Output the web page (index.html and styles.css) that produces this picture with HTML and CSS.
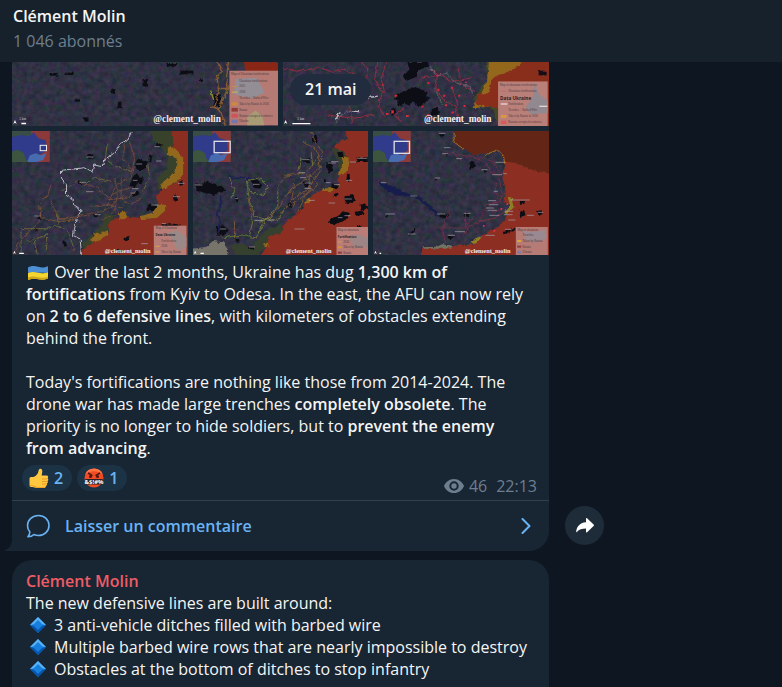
FILE: index.html
```html
<!DOCTYPE html>
<html lang="fr">
<head>
<meta charset="utf-8">
<meta name="viewport" content="width=device-width, initial-scale=1">
<title>Clément Molin</title>
<link rel="stylesheet" href="styles.css">
</head>
<body>
<svg class="defs" aria-hidden="true">
  <defs>
    <filter id="terrain" x="0" y="0" width="100%" height="100%" color-interpolation-filters="sRGB">
      <feTurbulence type="fractalNoise" baseFrequency="0.06" numOctaves="5" seed="4"/>
      <feColorMatrix values=".2 0 0 0 .09  0 .13 0 0 .13  .1 0 .12 0 .155  0 0 0 0 1"/>
    </filter>
    <filter id="rough" x="-5%" y="-5%" width="110%" height="110%">
      <feTurbulence type="fractalNoise" baseFrequency="0.07" numOctaves="3" seed="9"/>
      <feDisplacementMap in="SourceGraphic" scale="12" xChannelSelector="R" yChannelSelector="G"/>
    </filter>
    <symbol id="inset" viewBox="0 0 114 93">
      <rect width="114" height="93" fill="#394c45"/>
      <path d="M58 0h56v93H70l-8-30z" fill="#8b3a39"/>
      <path d="M0 18l30-6 22 4 14-12 14 18 22 6 4 28-18 14-20 4-12 16-16-6-10-16-14-6-16 2z" fill="#303b8b"/>
      <path d="M46 93l8-20 18-6 14 6 18-6-10 20-20 6z" fill="#486aae"/>
      <path d="M0 62l18-6 18 10 8 27H0z" fill="#3d553f"/>
    </symbol>
    <symbol id="diamond" viewBox="0 0 16 16">
      <path d="M8 0l8 8-8 8-8-8z" fill="#1475d3"/>
      <path d="M8 0l8 8-8-1-8 1z" fill="#59b3f5"/>
      <path d="M0 8l8 8 8-8-8 2z" fill="#0754ab"/>
      <path d="M8 3l5 5-5 5-5-5z" fill="#1780df"/>
    </symbol>
  </defs>
</svg>

<header class="topbar">
  <h1 class="topbar-title">Clément Molin</h1>
  <p class="topbar-sub">1 046 abonnés</p>
</header>

<main class="feed">
  <div class="row">
    <article class="bubble bubble-tail">
      <div class="album album-two">
        <figure class="photo">
          <svg viewBox="36 187 798 191" preserveAspectRatio="xMidYMid slice" role="img" aria-label="Carte des fortifications">
            <rect x="36" y="187" width="798" height="191" filter="url(#terrain)"/>
            <g filter="url(#rough)">
              <path d="M730 187h110v60H740z" fill="#8a2816"/>
              <g fill="#111017"><path d="M150 220h24v8h-24zM195 218h28v8h-28zM428 236h16v24h-16zM540 212h36v12h-36zM334 266h14v14h-14zM354 308h14v16h-14zM500 190h28v10h-28zM640 284h22v34h-22zM250 352h16v10h-16zM225 298h16v8h-16zM596 236h14v8h-14z"/></g>
              <g class="tracks" fill="none" stroke="#a26a2c" stroke-width="4"><path d="M652 187l14 24-16 20 4 40-10 50 20 20 10 37M684 187l-6 50 6 30-30 60-26-8M652 266h32"/></g>
              <path d="M630 270l10 30" stroke="#8b8c34" stroke-width="4"/>
            </g>
            <rect x="687" y="213" width="147" height="163" fill="#b47a73"/>
            <path d="M705 238l65-4 22 45-38 16-54-12z" fill="#938d96"/>
            <path d="M740 350l25-18 20 16 6 28h-51z" fill="#a99c75"/>
            <g class="legend-sm"><text x="692" y="226">Map of Ukrainian fortifications</text><text x="716" y="246">Ukrainian fortifications</text><text x="716" y="263">2025</text><text x="716" y="280">2026</text><text x="716" y="298">Trenches + Barbed Wire</text><text x="716" y="315">Taken by Russia in 2026</text><text x="716" y="333">Russia</text><text x="716" y="350">Russian occupied territories</text><text x="716" y="367">Ukraine</text></g>
            <path d="M694 260h18" stroke="#c98a51" stroke-width="3"/><path d="M694 277h18" stroke="#c7b849" stroke-width="3"/>
            <path d="M693 307h19v10h-19z" fill="#cc8a3e"/><path d="M693 324h19v11h-19z" fill="#913c3b"/><path d="M693 342h19v11h-19z" fill="#d0535a"/><path d="M693 359h19v11h-19z" fill="#7578ad"/>
            <path d="M42 372l5-12 5 12-5-4zM66 368h14v5H66z" fill="#fff"/><text class="scale" x="60" y="360">5 km</text>
            <text class="credit" x="460" y="367">@clement_molin</text>
          </svg>
        </figure>
        <figure class="photo">
          <svg viewBox="15 22 798 191" preserveAspectRatio="xMidYMid slice" role="img" aria-label="Carte des fortifications">
            <rect x="15" y="22" width="798" height="191" filter="url(#terrain)"/>
            <g filter="url(#rough)">
              <path d="M625 15h200v200H660l-15-50-60-30 40-60z" fill="#424626"/>
              <path d="M632 15h110v80l-100 60-60 5 30-50 14-30z" fill="#94681f"/>
              <path d="M735 15h90v200H665l-5-55-65-10 5-35 30 0 5-35 15-15 30-10 20-10 20-10z" fill="#8a2e1f"/>
              <path d="M780 48h24v14h-24z" fill="#171016"/>
              <g fill="#110f17"><path d="M388 22h60v14l-25 10-10 22-30 10-8-14 20-20zM358 116l30-8 18-14 20 8 26 10-8 14 16 6-16 8-14 16-26-14-10 10-16-6-8 8-14-4 6-12-16-6zM458 162l20-4 8 16-22 8-6-6zM336 164l16-4 4 18-18 4z"/></g>
              <g class="tracks" fill="none" stroke="#a82d42" stroke-width="3"><path d="M15 40l50 10 60-12 40 15 35-10 40 20M250 22l20 20-10 40M300 22l-10 50 25 40-15 40 20 30M325 22l-15 50 10 40M215 150l10 60M380 160l-30 20 20 20M430 70l60-10 30 20 60-10M450 40l30 20-10 35 30 45 30 10 10 40M540 40l10 50 40 20M520 100l20 50M150 180l80 10 60-10"/></g>
              <g class="tracks" fill="none" stroke="#898b95" stroke-width="2"><path d="M455 35l20 30 30-10 30 30 40 10 10 30M470 100l25 55M175 205l15-25 30-12"/></g>
              <path d="M272 128l28-4M220 168l24 2M176 190l12-18" stroke="#bdb8ba" stroke-width="4"/>
            </g>
            <g fill="#d62a38"><path d="M448 82h6v6h-6zM478 102h6v6h-6zM495 120h6v6h-6zM518 96h6v6h-6zM500 148h7v6h-7zM540 120h6v6h-6zM556 150h6v6h-6zM430 152h6v6h-6zM520 170h7v6h-7zM384 180h8v6h-8zM350 120h8v6h-8zM340 166h8v10h-8zM475 60h5v5h-5zM560 80h5v5h-5zM312 88h5v5h-5zM324 174h8v6h-8zM446 178h8v6h-8zM580 192h6v5h-6zM530 190h6v5h-6z"/></g>
            <rect x="659" y="80" width="148" height="133" fill="#b9807a"/>
            <path d="M767 84l14 34 26 20v36l-50 4-16-20 22-32z" fill="#928890"/>
            <g class="legend-sm"><text x="664" y="94">Map of ukrainian fortifications</text><text x="689" y="113">Ukrainian fortifications</text><text x="689" y="151">Fortification</text><text x="689" y="169">Trenches + Barbed Wire</text><text x="689" y="187">Taken by Russia in 2026</text><text x="689" y="205">Russian occupied territories</text></g>
            <text class="legend-lg" x="665" y="136">Data Ukraine</text>
            <path d="M667 109h16" stroke="#ce5962" stroke-width="2"/><path d="M667 147h20M782 154h24" stroke="#f7eeee" stroke-width="3"/>
            <path d="M667 180h17v9h-17z" fill="#d99840"/><path d="M667 197h17v10h-17z" fill="#d9595d"/>
            <path d="M20 207l5-12 5 12-5-4zM45 204h54v4H45z" fill="#fff"/><text class="scale" x="60" y="194">5 km</text>
            <text class="credit" x="438" y="201">@clement_molin</text>
          </svg>
          <span class="date-chip">21 mai</span>
        </figure>
      </div>
      <div class="album album-three">
        <figure class="photo">
          <svg viewBox="12 9 528 372" preserveAspectRatio="xMidYMid slice" role="img" aria-label="Carte des fortifications, est">
            <rect x="12" y="9" width="528" height="372" filter="url(#terrain)"/>
            <g filter="url(#rough)">
              <path d="M425 0H495V60L522 90 505 140 450 190V150L478 120 480 90 462 60 440 40zM225 345L285 290 290 260 325 262 305 290 300 320 230 370z" fill="#37432b"/>
              <path d="M490 0L495 60 522 85V130L512 160 470 180 445 205 450 228 472 235 465 255 430 272 345 265 305 280 302 322 270 335 225 365 215 395H555V0z" fill="#8a2d20"/>
              <path d="M480 55L500 60 526 85V135L510 160 465 183 457 168 482 150 508 120V92L480 80zM444 230h28v18l-25 22-48 4v-9l38-12zM330 256l20-6 12 16-25 10zM257 312l18 4 25-10 2 16-40 20-16-5 12-12z" fill="#94681f"/>
              <g fill="#100f16"><path d="M385 100l14-8 22 10-6 18-20 8-14-10zM375 147l12-12 11 16 9-4-6 22-13-2-7 12-13-6zM370 194l18-4 8 10-20 6zM416 230l18-4 14 8-10 14-22 2zM236 82l18-4 8 12-20 4zM88 262h12v14H88zM80 300h10v10H80zM258 256l14 2-4 10-12-2zM164 342l10-4 4 16-12 2zM495 207l10-12 4 22-10 4zM446 44l16 4-6 10-12-2zM424 76l10 4-4 24-8-4zM514 162l10-6 2 14-10 4zM460 292l24-6 36 4-20 8-34 4zM350 331l12-8 2 12-12 6zM325 366h22l-6 8-12-2zM212 157l10 4-4 8-8-4z"/></g>
              <g class="tracks" fill="none" stroke="#8c5634" stroke-width="2.500"><path d="M365 40l15 50-10 60-45 20-35 80-60 10-50 20M130 170l-10 30-25 30 5 40 50 10 40 0M125 215l30 60 60-10M160 190l50-30 60 20 30 30 30-20 40-10M320 150l10 40-10 60-40 30M340 150l0 60 30 20 30-20M300 215l60-5 30-30M290 250l60-50M245 235l60-5 40 10M355 30l-10 60 30 40M100 235l-5 45-60 60-20 40M148 270l70 10"/></g>
              <g class="tracks" fill="none" stroke="#797338" stroke-width="3"><path d="M298 45l-5 45 30 25 50 15M420 110l5 40-20 40M40 302h80l20-10 40 15 20 60M40 302v70M60 340l60-20-5 50M220 180l40-30 50 10M150 290v-40M78 330l10 50"/></g>
              <path d="M370 12l-10 24-22 10-20 30-30 20-5 20-25-5-5 20-22-12-70 8 0 26 15 20 0 30 20 10 2 20 22 15-15 25-8 50 20 10 4 50" fill="none" stroke="#bab9c2" stroke-width="3"/>
            </g>
            <path d="M215 163h20M235 191h22M385 108h18M445 99h16M375 157h14M372 182h20M430 231h22M260 260h18M236 87h22M496 206h20M510 166h20M400 347h20M368 195h15M462 287h12M80 264h18M440 56h16" stroke="#aaa6b0" stroke-width="2"/>
            <use href="#inset" x="12" y="9" width="114" height="93"/><rect x="97" y="52" width="19" height="16" fill="none" stroke="#eee" stroke-width="3"/>
            <rect x="438" y="293" width="98" height="88" fill="#b77c76"/><path d="M478 315l30-8 28 20v30l-25 12-15-30z" fill="#9b8988"/>
            <g class="legend-sm"><text x="443" y="304">Map of Ukrainian</text><text x="460" y="341">Fortification</text><text x="460" y="358">2026</text><text x="460" y="375">Taken by Russia</text></g>
            <text class="legend-lg legend-tiny" x="443" y="325">Data Ukraine</text><path d="M443 355h12M443 372h12" stroke="#dca344" stroke-width="3"/>
            <path d="M16 378l4-10 4 10-4-3zM34 374h14v4H34z" fill="#fff"/>
            <text class="credit credit-sm" x="291" y="374">@clement_molin</text>
          </svg>
        </figure>
        <figure class="photo">
          <svg viewBox="15 9 528 372" preserveAspectRatio="xMidYMid slice" role="img" aria-label="Carte des fortifications, sud-est">
            <rect x="15" y="9" width="528" height="372" filter="url(#terrain)"/>
            <g filter="url(#rough)">
              <path d="M10 362l45-5 20-18 30 4 14 20 5 30H10z" fill="#77756b"/>
              <path d="M430 60L468 66 482 100 455 130 450 100zM125 352L160 347 190 360 230 310 280 290 285 315 245 325 235 358 200 390H150z" fill="#35402d"/>
              <path d="M470 0L478 30 440 50V62L468 70 485 105 475 130 452 142V180L405 185 380 195 352 222 340 248 290 285 278 315 242 325 235 358 210 395H555V0z" fill="#8c2d20"/>
              <path d="M460 82l22 8 2 23-16 26-18 2 8-20 8-15zM404 181l26 0 20-13 6 8-28 14-24-2zM352 218l12-10 6 10-14 8zM230 346l12-2v12l-12 2z" fill="#94681f"/>
              <g fill="#110f15"><path d="M20 170l22-2 10-10 22 10 30 8 12 12-24 4-10 10-26-8-32-6zM84 296l22-4 16 14-8 14-26 0zM188 156l20-2 12 16-4 12-16-2-8-12zM144 209l10 2-4 10-10-4zM342 94l20-2 6 14-20-2zM416 104l14-4 6 28-16 8zM348 164l14-2 2 14-14 2zM404 150l12 6-6 8zM434 166l20 8-8 10-12-4zM372 28l14-6 4 20-16 2zM448 73l16-2 4 16-16 0zM506 88l34 0 0 14-30 0zM478 137l8 2-2 24-8-6zM428 272l26-10 10-12 22 6-6 16-22 10-18 10-20-8zM470 205l26-4 6 16-24 12-8-10zM515 230l20-4 6 16-22 6zM500 252l24-4 8 12-26 4zM435 198l16-4 0 10-14 2zM505 291l16 0-4 10-12-2zM143 330l10 0 2 10-12 2zM183 358l12-4 4 8-14 4zM302 225l12 4-4 8-10-2z"/></g>
              <path d="M118 130l12 20 60 2M98 205l2 30-14 20 12 30-6 30" fill="none" stroke="#1a2350" stroke-width="5"/>
              <g class="tracks" fill="none" stroke="#8e5d30" stroke-width="3"><path d="M370 12l15 35 20 25-15 50-30 30-50 30-40 60-40 40M345 40l40 25 15 60-40 60-50 30M395 80l-35 50 30 40-40 35-20 50M270 180l20-35 50-10 30 10M140 280v50M180 210l15 60M320 165l-10 60-30 30M360 145l10 40-60 50"/></g>
              <g class="tracks" fill="none" stroke="#7a8736" stroke-width="3"><path d="M175 155l10 60 15 50 40 10 30-40 0-50M176 158l40-8 25 25-15 30-40-15zM195 275l-10 50M105 330l60-10 40 10 20-50M200 280l70-5 20-30M125 150l15 40-10 20M340 90l-10 40M240 270l-35 55M370 75l5 40"/></g>
            </g>
            <path d="M20 171h24M195 169h20M342 95h22M332 134h20M337 149h18M350 165h20M420 105h24M430 101h22M485 102h20M508 91h30M475 157h18M422 225h20M363 217h18M350 181h20M200 277h26M242 276h16M320 303h30M97 303h18M470 213h22M450 269h14M470 263h18M414 164h14M183 357h18M142 212h10M438 170h18" stroke="#aaa4ae" stroke-width="2"/>
            <use href="#inset" x="15" y="9" width="114" height="93"/><rect x="79" y="40" width="48" height="34" fill="none" stroke="#dcdce6" stroke-width="4"/>
            <rect x="446" y="297" width="97" height="84" fill="#b97c77"/><path d="M478 325l30-6 35 12v26l-40 4z" fill="#9d8585"/>
            <g class="legend-sm"><text x="450" y="308">Map of ukrainian</text><text x="466" y="345">2026</text><text x="466" y="361">Taken by Russia</text><text x="466" y="377">Russia</text></g>
            <text class="legend-lg legend-tiny" x="450" y="329">Fortification</text><path d="M450 342h12" stroke="#dcb144" stroke-width="2"/><path d="M450 355h12v6h-12z" fill="#d9903d"/><path d="M450 371h12v6h-12z" fill="#91373b"/>
            <path d="M18 378l4-10 4 10-4-3zM38 374h10v4H38z" fill="#fff"/>
            <text class="credit credit-sm" x="294" y="374">@clement_molin</text>
          </svg>
        </figure>
        <figure class="photo">
          <svg viewBox="12 9 528 372" preserveAspectRatio="xMidYMid slice" role="img" aria-label="Carte des fortifications, Dnipro">
            <rect x="12" y="9" width="528" height="372" filter="url(#terrain)"/>
            <g filter="url(#rough)">
              <path d="M162 358l40-2 20-8 28 5 0 16-86 5z" fill="#6e7463"/>
              <path d="M404 60h150v330H160v-28l70 0 40-12 40 0 30-28 40-20 30-30 15-35-18-20 5-30-10-30 5-40z" fill="#8c2f22"/>
              <path d="M416 207l14 6 4 26-20 20-8-4 14-16 2-16zM304 347l10-14 26-10-18 20z" fill="#8d7f27"/>
              <path d="M256 0h294v140l-60-15-50-20-34-5-16-34-40 10-40 5-16-14-36-22z" fill="#642716"/>
              <path d="M256 15l0 30 30 18M350 80l36-14 18 18 4 22" fill="none" stroke="#a57120" stroke-width="3"/>
              <path d="M30 162l24 6 40 16 26 16-10 8-28-6-26-14-14-12z" fill="#171e4c"/>
              <path d="M110 200l40 10 40 35 20 16" fill="none" stroke="#171e4c" stroke-width="7"/>
              <g fill="#110f16"><path d="M300 108l12-10 10 12-4 10-16 2zM210 260l18 0 10-6 4 10-12 6-18-2zM122 318l16-20 2 8-16 22zM236 322l20 4-10 8-10-4zM134 202l14 2-6 8zM212 16l16 0-4 8-12-2zM196 149l8 0 0 8-8 0zM288 254l14 4-8 8-10-4zM228 74l8 4-6 6zM50 260h8v6h-8zM450 248l16-2 4 16-16 6zM505 249l14-2 2 12-12 4zM402 313l22-8 0 8-20 6zM453 219l14 0 0 8-14 4zM424 304l12-8 4 8-14 8zM344 124l10 4-6 8z"/></g>
              <g class="tracks" fill="none" stroke="#8c2e4b" stroke-width="2.500"><path d="M260 80l50 5 40 20 20 30 30 10M310 90l40 0 30 15M390 150l10 50-10 30M250 70l30 30M330 285l-30 10-20 30M400 220l-50 10-20 50 50-10M370 255l40-15M200 300l90 0 20-30M240 250l-20 50 10 45M370 105l30 35M290 250l0 50 20 20M385 165l-10 30 25 10M345 250l40-30M410 250l-40 25-40 5"/></g>
              <path class="tracks" d="M210 40l-15 100M180 130l-20 70" fill="none" stroke="#20395a" stroke-width="4"/>
            </g>
            <path d="M380 103h28M262 92h18M225 59h20M220 77h18M338 125h18M370 140h30M402 137h12M198 150h16M36 164h16M50 258h28M124 204h22M204 258h24M118 318h22M236 322h22M258 311h30M285 256h20M358 218h24M425 216h58M360 230h28M352 240h24M356 247h28M362 262h30M407 250h26M405 260h26M475 262h20M507 253h16M375 190h12M350 322h28M210 16h20M418 276h22M408 304h20" stroke="#aaa4ae" stroke-width="2"/>
            <path d="M374 306h5v5h-5zM342 291h5v5h-5zM413 226h5v5h-5zM395 240h5v5h-5z" fill="#e63446"/>
            <use href="#inset" x="12" y="9" width="114" height="93"/><rect x="76" y="40" width="46" height="36" fill="none" stroke="#dcdce6" stroke-width="4"/>
            <rect x="441" y="297" width="96" height="84" fill="#b67b75"/><path d="M465 308l28 4 36-6 5 24-40 16-25-12z" fill="#9a8990"/>
            <g class="legend-sm"><text x="445" y="308">Map of ukrainian</text><text x="461" y="325">Trenches</text><text x="461" y="342">Taken by Russia</text><text x="461" y="359">Russia</text><text x="461" y="376">Ukraine</text></g>
            <path d="M445 336h12v6h-12z" fill="#dda43e"/><path d="M445 353h12v6h-12z" fill="#94393e"/><path d="M445 370h12v6h-12z" fill="#7678b2"/>
            <path d="M16 378l4-10 4 10-4-3zM32 374h5v4h-5z" fill="#fff"/>
            <text class="credit credit-sm" x="288" y="374">@clement_molin</text>
          </svg>
        </figure>
      </div>

      <div class="text">
        <p><svg class="emoji" viewBox="0 0 22 16" role="img" aria-label="Drapeau de l’Ukraine"><path d="M1 2.500C5 .5 8 1 11 1.800s6 1 10-.6v6.600H1z" fill="#4d8fd3"/><path d="M1 8c4-1.500 7-.8 10-.2s6 .8 10-.6v6.300c-4 1.700-7 1.300-10 .7S5 13.500 1 15z" fill="#f5d52f"/><path d="M1 12.500c4-1.500 7-.8 10-.2s6 .8 10-.6v1.800c-4 1.700-7 1.300-10 .7S5 13.500 1 15z" fill="#cda51b"/></svg> Over the last 2 months, Ukraine has dug <strong>1,300 km of fortifications</strong> from Kyiv to Odesa. In the east, the AFU can now rely on <strong>2 to 6 defensive lines</strong>, with kilometers of obstacles extending behind the front.</p>
        <p>Today's fortifications are nothing like those from 2014-2024. The drone war has made large trenches <strong>completely obsolete</strong>. The priority is no longer to hide soldiers, but to <strong>prevent the enemy from advancing</strong>.</p>
      </div>

      <div class="meta">
        <div class="reactions">
          <button class="reaction" type="button" aria-label="Pouce levé, 2">
            <svg viewBox="0 0 20 20" aria-hidden="true"><path d="M10.500 1c1.800-.8 3 .6 2.800 2.500l-.6 4h4.800c1.800 0 2.300 2 .9 2.800 1.300.6 1.200 2.300 0 2.800.9.800.5 2.100-.5 2.500.6 1 0 2.100-1 2.300C17 19.300 15.800 20 14.500 20H8c-1.800 0-3.200-.8-4.600-1H2c-1 0-1.500-.8-1.500-2v-6C.5 9.700 1 9 2 9h2.200c2-.5 3.500-2 4.500-3.500.9-1.500.6-3.900 1.800-4.500z" fill="#ffc93f"/><path d="M13 11h5M13 13.500h5M13 16h4.500" fill="none" stroke="#e89323" stroke-width=".9"/><path d="M1 17c2 1 4 .5 7 2.500h6c1 0 2-.5 2.400-1.200" fill="none" stroke="#eda12a"/></svg>
            <span>2</span>
          </button>
          <button class="reaction" type="button" aria-label="Colère, 1">
            <svg viewBox="0 0 20 20" aria-hidden="true"><circle cx="10" cy="10" r="9.500" fill="#f04b24"/><path d="M1 7a9.500 9.500 0 0118 0C15 2 5 2 1 7z" fill="#ff7440"/><path d="M4 5l4.500 2.600M16 5l-4.500 2.600" stroke="#4d1714" stroke-width="1.500"/><circle cx="6.500" cy="8.500" r="1.500" fill="#4d1714"/><circle cx="13.500" cy="8.500" r="1.500" fill="#4d1714"/><rect x="1" y="11" width="18" height="5.500" rx="1" fill="#2a2225"/><text class="grawlix" x="10" y="16" text-anchor="middle">&amp;$!#%</text></svg>
            <span>1</span>
          </button>
        </div>
        <div class="stats">
          <svg viewBox="0 0 20 14" aria-hidden="true"><path fill-rule="evenodd" d="M10 0c4.600 0 8 3 9.700 6.300a1.500 1.500 0 010 1.400C18 11 14.600 14 10 14S2 11 .3 7.700a1.500 1.500 0 010-1.400C2 3 5.400 0 10 0zm0 2.300a4.700 4.700 0 100 9.400 4.700 4.700 0 000-9.400zm0 2a2.700 2.700 0 110 5.400 2.700 2.700 0 010-5.400z" fill="currentColor"/></svg>
          <span>46</span>
          <time>22:13</time>
        </div>
      </div>

      <a class="comment" href="#comments">
        <svg class="comment-icon" viewBox="0 0 24 24" aria-hidden="true"><path d="M12.500 1.500C18.500 1.500 23 5.800 23 11.500s-4.500 10-10.500 10c-1.700 0-3.200-.3-4.600-1-1.500 1.500-3.600 2.400-6 2.300 1.200-1.400 1.900-3 1.900-4.900C2.100 16.200 1.500 14 1.500 11.500c0-5.700 5-10 11-10z" fill="none" stroke="currentColor" stroke-width="1.600" stroke-linejoin="round"/></svg>
        <span>Laisser un commentaire</span>
        <svg class="chevron" viewBox="0 0 10 16" aria-hidden="true"><path d="M1.500 1l7 7-7 7" fill="none" stroke="currentColor" stroke-width="2" stroke-linecap="round" stroke-linejoin="round"/></svg>
      </a>
      <svg class="tail" viewBox="0 0 8 12" aria-hidden="true"><path d="M8 0v12H0V11c4-1 7-5 7-11z" fill="currentColor"/></svg>
    </article>
    <button class="share" type="button" aria-label="Partager">
      <svg viewBox="0 0 18 16" aria-hidden="true"><path d="M10 .8c0-.7.600-1 1.100-.5l6.500 6.200c.5.500.5 1 0 1.500l-6.500 6.200c-.5.500-1.100.2-1.100-.5V10.600C6 10.600 3 11.300.9 14c-.3.400-.8.200-.7-.3C.6 9 3.500 4.700 10 4.200z" fill="#fff"/></svg>
    </button>
  </div>

  <article class="bubble bubble-text">
    <h2 class="author">Clément Molin</h2>
    <p>The new defensive lines are built around:</p>
    <ul class="points">
      <li><svg class="gem" aria-hidden="true"><use href="#diamond"/></svg>3 anti-vehicle ditches filled with barbed wire</li>
      <li><svg class="gem" aria-hidden="true"><use href="#diamond"/></svg>Multiple barbed wire rows that are nearly impossible to destroy</li>
      <li><svg class="gem" aria-hidden="true"><use href="#diamond"/></svg>Obstacles at the bottom of ditches to stop infantry</li>
    </ul>
  </article>
</main>
</body>
</html>
```
FILE: styles.css
```css
* {
  box-sizing: border-box;
}

body {
  margin: 0;
  height: 100vh;
  display: flex;
  flex-direction: column;
  overflow: hidden;
  background: #0e1621;
  color: #f5f5f5;
  font: 16px/22px "Open Sans", "Noto Sans", sans-serif;
}

h1, h2, p, ul, figure {
  margin: 0;
  padding: 0;
}

strong {
  font-weight: 600;
}

button {
  border: 0;
  padding: 0;
  font: inherit;
  cursor: pointer;
}

.defs {
  position: absolute;
  width: 0;
  height: 0;
}

.topbar {
  flex: none;
  padding: 4px 13px 8px;
  background: #17212b;
}

.topbar-title {
  font-size: 16px;
  line-height: 25px;
  font-weight: 600;
}

.topbar-sub {
  line-height: 25px;
  color: #6d7f8f;
}

.feed {
  flex: 1;
  min-height: 0;
  overflow: hidden;
  display: flex;
  flex-direction: column;
  gap: 9px;
  padding-left: 12px;
}

.row {
  flex: none;
  display: flex;
  align-items: flex-end;
  gap: 16px;
}

.bubble {
  position: relative;
  flex: 0 1 537px;
  min-width: 0;
  background: #182533;
}

.bubble-tail {
  border-radius: 0 0 20px 0;
}

.tail {
  position: absolute;
  left: -7px;
  bottom: 0;
  width: 8px;
  height: 12px;
  color: #182533;
}

.album {
  display: grid;
  gap: 5px;
  margin-bottom: 5px;
}

.album-two {
  grid-template-columns: repeat(2, 1fr);
}

.album-three {
  grid-template-columns: repeat(3, 1fr);
}

.photo {
  position: relative;
}

.photo > svg {
  display: block;
  width: 100%;
}

.album-two .photo > svg {
  height: 64px;
}

.album-three .photo > svg {
  height: 124px;
}

.date-chip {
  position: absolute;
  left: 7px;
  top: 12px;
  padding: 4px 15px 5px;
  border-radius: 16px;
  background: #212c3ff0;
  font-weight: 600;
}

.tracks {
  opacity: 0.75;
}

.credit {
  font: bold 28px "Liberation Serif", serif;
  fill: #f3eeee;
}

.credit-sm {
  font-size: 19px;
}

.legend-sm {
  font: 9px "Liberation Serif", serif;
  fill: #503c40;
}

.legend-lg {
  font: bold 14px "Open Sans", sans-serif;
  fill: #2c2024;
}

.legend-tiny {
  font-size: 9px;
}

.scale {
  font: 10px "Liberation Serif", serif;
  fill: #d8d5dc;
}

.text {
  display: grid;
  gap: 22px;
  padding: 1px 18px 0 14px;
}

.emoji {
  width: 22px;
  height: 16px;
  margin: 0 1px;
  vertical-align: -3px;
}

.meta {
  display: flex;
  justify-content: space-between;
  padding: 6px 12px 0 10px;
}

.reactions {
  display: flex;
  gap: 5px;
  margin-bottom: 9px;
}

.reaction {
  display: flex;
  align-items: center;
  gap: 5px;
  height: 26px;
  padding: 0 9px 0 7px;
  border-radius: 13px;
  background: #1c3346;
  color: #6ab3f3;
  font-weight: 600;
}

.reaction svg {
  width: 20px;
  height: 20px;
}

.grawlix {
  font: bold 6px "Open Sans", sans-serif;
  fill: #fff;
}

.stats {
  display: flex;
  align-items: center;
  gap: 5px;
  padding-top: 6px;
  color: #6d7f8f;
}

.stats svg {
  width: 20px;
  height: 14px;
}

.stats time {
  margin-left: 4px;
}

.comment {
  display: flex;
  align-items: center;
  gap: 15px;
  padding: 13px 18px 13px 14px;
  border-top: 1px solid #2f404f;
  color: #6ab3f3;
  font-weight: 600;
  text-decoration: none;
}

.comment-icon {
  width: 24px;
  height: 24px;
}

.chevron {
  width: 10px;
  height: 16px;
  margin-left: auto;
}

.share {
  flex: none;
  display: grid;
  place-items: center;
  width: 39px;
  height: 39px;
  margin-bottom: 6px;
  border-radius: 50%;
  background: #1e2c3a;
}

.share svg {
  width: 18px;
  height: 16px;
}

.bubble-text {
  flex: none;
  width: 537px;
  max-width: 100%;
  padding: 10px 12px 10px 14px;
  border-radius: 20px 20px 0 0;
}

.author {
  font-size: 16px;
  line-height: 22px;
  font-weight: 600;
  color: #ee5c66;
}

.points {
  list-style: none;
}

.points li {
  display: flex;
  align-items: center;
}

.gem {
  flex: none;
  width: 16px;
  height: 16px;
  margin: 0 8px 0 4px;
}
```
